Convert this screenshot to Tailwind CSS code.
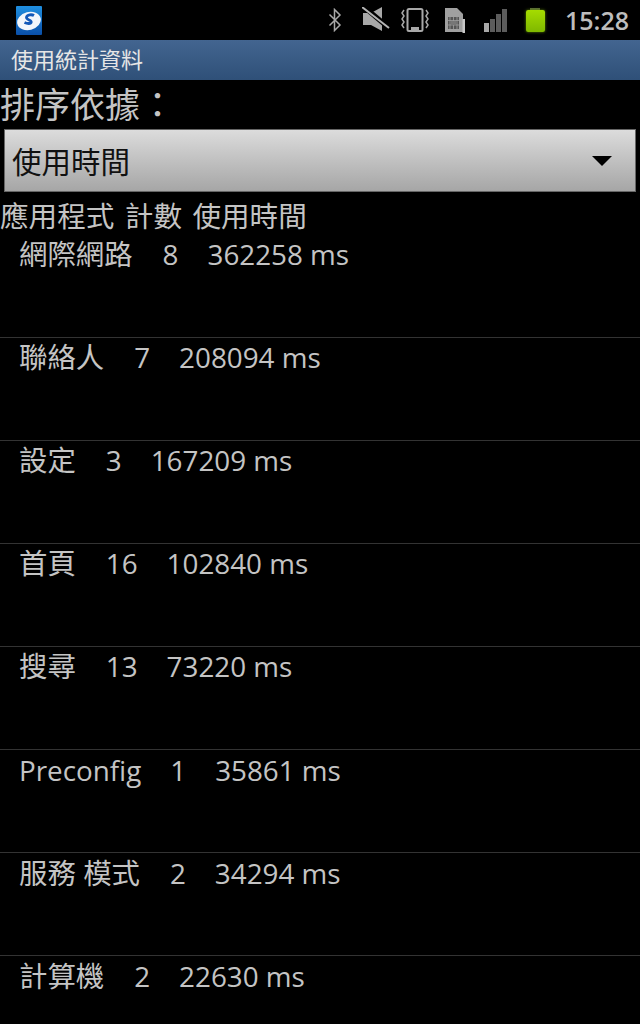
<!DOCTYPE html>
<html lang="zh-Hant">
<head>
  <meta charset="UTF-8" />
  <title>使用統計資料</title>
  <script src="https://cdn.jsdelivr.net/npm/@tailwindcss/browser@4"></script>
</head>
<body class="bg-black w-[640px] h-[1024px] overflow-hidden font-['Open_Sans','Noto_Sans_CJK_TC',sans-serif] text-[#c4c4c4]">

  <!-- Status bar -->
  <header class="h-10 flex items-center bg-black pl-4 pr-[11px]">
    <svg class="w-[26px] h-[29px]" viewBox="0 0 26 29">
      <defs>
        <linearGradient id="appBg" x1="0" y1="0" x2="0" y2="1">
          <stop offset="0" stop-color="#1f8fe0" />
          <stop offset="1" stop-color="#0a4fa8" />
        </linearGradient>
      </defs>
      <rect width="26" height="29" rx="1" fill="url(#appBg)" />
      <ellipse cx="13" cy="15" rx="12" ry="9" fill="#f2f6fb" transform="rotate(-14 13 15)" />
      <path d="M18 9.500c-2-1.200-7-1.200-7.500 1.800-.4 3 5.200 2.400 4.700 5-.3 1.500-3.700 1.600-6.700.2" fill="none" stroke="#1258b8" stroke-width="2.800" />
    </svg>
    <div class="ml-auto flex items-center">
      <!-- bluetooth -->
      <svg class="w-[14px] h-[24px]" viewBox="0 0 14 24" fill="none" stroke="#a8a8a8" stroke-width="1.500">
        <path d="M1.500 6.500 12 17l-5.500 5.500v-21L12 7 1.500 17.500" />
      </svg>
      <!-- muted speaker -->
      <svg class="w-[28px] h-[26px] ml-[20px]" viewBox="0 0 28 26">
        <path d="M1 6h8l11-6v24L9 18H1z" fill="#a8a8a8" />
        <path d="M1 -1l26 22" stroke="#000" stroke-width="5" />
        <path d="M0 0l27 21" stroke="#b4b4b4" stroke-width="2" />
      </svg>
      <!-- vibrate -->
      <svg class="w-[30px] h-[24px] ml-[10px]" viewBox="0 0 30 24" fill="none" stroke="#a8a8a8" stroke-width="1.500">
        <rect x="7.500" y="1" width="15" height="22" rx="1.500" stroke-width="2" />
        <rect x="11" y="19" width="8" height="3" fill="#a8a8a8" stroke="none" />
        <path d="M4 2 2 5l2 3-2 3 2 3-2 3 2 3M26 2l2 3-2 3 2 3-2 3 2 3-2 3" />
      </svg>
      <!-- sim card -->
      <svg class="w-[20px] h-[25px] ml-[15px]" viewBox="0 0 20 25">
        <path d="M0 0h12l6 6v18H0z" fill="#a0a0a0" />
        <rect x="3" y="9" width="11" height="12" fill="#555" />
        <path d="M5 9v12M8.500 9v12M12 9v12M3 12.500h11M3 17h11" stroke="#a0a0a0" stroke-width=".8" />
        <rect x="6" y="13" width="5" height="4" fill="#777" />
        <rect x="17.500" y="11" width="2.500" height="14" fill="#c8c8c8" />
      </svg>
      <!-- signal -->
      <div class="flex items-end gap-px ml-[19px] h-[23px]">
        <span class="w-[5px] h-[9px] bg-[#a8a8a8]"></span>
        <span class="w-[5px] h-[13px] bg-[#5c5c5c]"></span>
        <span class="w-[5px] h-[18px] bg-[#5c5c5c]"></span>
        <span class="w-[5px] h-[23px] bg-[#5c5c5c]"></span>
      </div>
      <!-- battery -->
      <div class="flex flex-col items-center ml-[19px]">
        <span class="w-[10px] h-[2px] bg-[#5b6b3a]"></span>
        <span class="w-[19px] h-[22px] rounded-[2px] bg-gradient-to-b from-[#a5dc00] to-[#7fb800] shadow-[0_0_3px_#5f8a00]"></span>
      </div>
      <span class="ml-[20px] text-[25px] leading-none font-semibold text-[#bdbdbd] font-['Open_Sans',sans-serif]">15:28</span>
    </div>
  </header>

  <!-- Title bar -->
  <div class="h-10 flex items-center pl-[11px] pb-0.5 text-[22px] leading-none text-[#e6e6e6] bg-gradient-to-b from-[#436590] to-[#2f5078]">使用統計資料</div>

  <main>
    <p class="h-[49px] text-[35px] leading-[49px] whitespace-nowrap">排序依據：</p>

    <!-- Sort spinner -->
    <div class="mx-1 h-[63px] flex items-center justify-between pl-[7px] pr-[23px] pt-[3px] border border-[#666] bg-gradient-to-b from-[#dcdcdc] to-[#a6a6a6] text-[29.5px] text-[#111]">
      <span>使用時間</span>
      <span class="w-0 h-0 -mt-[3px] border-x-[10px] border-x-transparent border-t-[10px] border-t-black"></span>
    </div>

    <p class="h-[44px] pt-[5px] text-[28.6px] leading-[38px] whitespace-nowrap [word-spacing:3px]">應用程式 計數 使用時間</p>

    <!-- Usage list -->
    <ul class="divide-y divide-[#333]">
      <li class="h-[103px] pl-[19px] flex gap-[29px] text-[27.8px] leading-[38px] whitespace-nowrap -mt-px"><span class="text-[28.4px] mr-px">網際網路</span><span>8</span><span>362258 ms</span></li>
      <li class="h-[103px] pl-[19px] flex gap-[29px] text-[27.8px] leading-[38px] whitespace-nowrap"><span class="text-[28.4px] mr-px">聯絡人</span><span>7</span><span>208094 ms</span></li>
      <li class="h-[103px] pl-[19px] flex gap-[29px] text-[27.8px] leading-[38px] whitespace-nowrap"><span class="text-[28.4px] mr-px">設定</span><span>3</span><span>167209 ms</span></li>
      <li class="h-[103px] pl-[19px] flex gap-[29px] text-[27.8px] leading-[38px] whitespace-nowrap"><span class="text-[28.4px] mr-px">首頁</span><span>16</span><span>102840 ms</span></li>
      <li class="h-[103px] pl-[19px] flex gap-[29px] text-[27.8px] leading-[38px] whitespace-nowrap"><span class="text-[28.4px] mr-px">搜尋</span><span>13</span><span>73220 ms</span></li>
      <li class="h-[103px] pl-[19px] pt-px flex gap-[29px] text-[27.8px] leading-[38px] whitespace-nowrap"><span>Preconfig</span><span>1</span><span>35861 ms</span></li>
      <li class="h-[103px] pl-[19px] pt-px flex gap-[29px] text-[27.8px] leading-[38px] whitespace-nowrap"><span class="text-[28.4px] mr-px">服務 模式</span><span>2</span><span>34294 ms</span></li>
      <li class="h-[103px] pl-[19px] pt-px flex gap-[29px] text-[27.8px] leading-[38px] whitespace-nowrap"><span class="text-[28.4px] mr-px">計算機</span><span>2</span><span>22630 ms</span></li>
    </ul>
  </main>
</body>
</html>
